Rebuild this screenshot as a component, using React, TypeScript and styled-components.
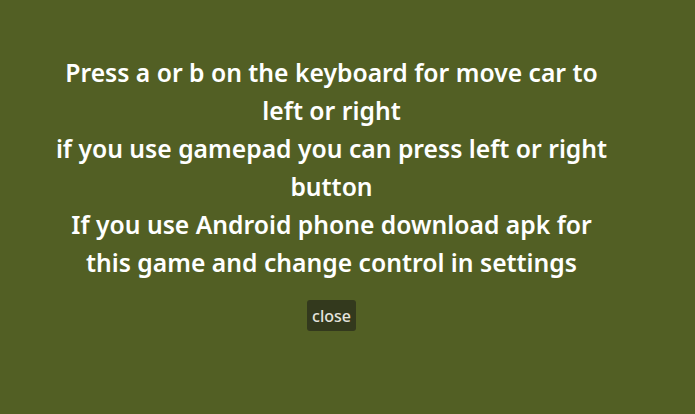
import React from "react";
import styled, { createGlobalStyle } from "styled-components";

const Global = createGlobalStyle`
  html, body { margin: 0; padding: 0; background: #525f24; }
  body { font-family: "Noto Sans", "Open Sans", sans-serif; }
`;

const Screen = styled.div`
  width: 695px;
  height: 414px;
  background: #525f24;
  display: flex;
  flex-direction: column;
  align-items: center;
  padding: 54px 32px 0 0;
  box-sizing: border-box;
`;

const Message = styled.div`
  max-width: 560px;
  color: #ffffff;
  font-size: 24.7px;
  font-weight: 600;
  line-height: 38px;
  text-align: center;
`;

const CloseButton = styled.button`
  margin-top: 18px;
  height: 31px;
  padding: 0 5px;
  border: none;
  border-radius: 3px;
  background: #33391d;
  color: #e4e4de;
  font-family: "Noto Sans", "Open Sans", sans-serif;
  font-size: 16px;
  font-weight: 500;
  cursor: pointer;
`;

export default function App() {
  return (
    <>
      <Global />
      <Screen>
        <Message>
          Press a or b on the keyboard for move car to left or right
          <br />
          if you use gamepad you can press left or right button
          <br />
          If you use Android phone download apk for this game and change control in settings
        </Message>
        <CloseButton>close</CloseButton>
      </Screen>
    </>
  );
}
